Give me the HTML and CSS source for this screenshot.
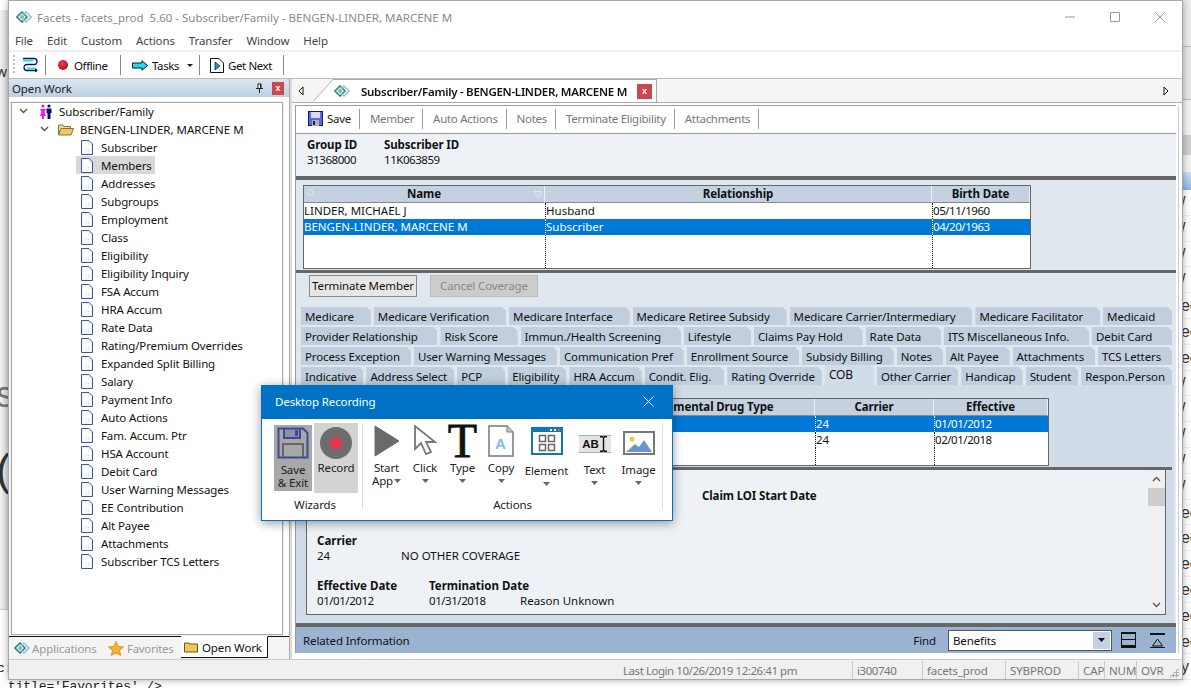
FILE: index.html
```html
<!DOCTYPE html>
<html lang="en">
<head>
  <meta charset="UTF-8" />
  <title>Facets - Desktop Recording</title>
  <link rel="stylesheet" href="styles.css">
</head>
<body>
  <svg class="defs" width="0" height="0">
    <symbol id="logo" viewBox="0 0 16 12">
      <path d="M6 1 11 6 6 11 1 6Z" fill="none" stroke="#2b8a7a" stroke-width="1.6"/>
      <path d="M10 1 15 6 10 11 5 6Z" fill="none" stroke="#9cc3d8" stroke-width="1.6"/>
      <path d="M6 3.5 8.5 6 6 8.5 3.5 6Z" fill="#7cc0a8"/>
    </symbol>
    <symbol id="doc" viewBox="0 0 12 15">
      <path d="M.5.5H8L11.5 4V14.5H.5Z" fill="#eef2fa" stroke="#3a5a96"/>
      <path d="M2 2H7V5H10V13H2Z" fill="#fff"/>
      <path d="M5 9h1v1H5zM7 9h1v1H7zM5 11h1v1H5zM7 11h1v1H7z" fill="#cfd8ea"/>
    </symbol>
    <symbol id="floppy" viewBox="0 0 15 15">
      <path d="M0 0H15V15H0Z" fill="#10205a"/>
      <path d="M1 1H14V14H1Z" fill="#5a6ad8"/>
      <path d="M3 1H12V7H3Z" fill="#d8dcf0"/>
      <path d="M4 9H11V15H4Z" fill="#b0b0b8"/>
      <path d="M5 10H7V14H5Z" fill="#202848"/>
    </symbol>
    <symbol id="caret" viewBox="0 0 7 4"><path d="M0 0H7L3.5 4Z" fill="#666"/></symbol>
  </svg>

  <div class="desktop">
    <div class="back-left">
      <span class="back-w">w</span>
      <span class="back-s">s</span>
      <span class="back-paren">(</span>
    </div>
    <div class="back-right">
      <div class="band band-a"></div>
      <div class="band band-b"></div>
      <div class="band band-c"></div>
      <div class="band band-d"></div>
      <div class="band band-e"></div>
      <div class="band band-f"></div>
      <div class="back-rows">
        <span>/</span><span>/</span><span>/</span><span>/</span>
        <span>ec</span><span>ec</span><span>ec</span>
        <span>/</span><span>/</span><span>/</span><span>/</span><span>/</span>
        <span>ec</span><span>ec</span><span>ec</span><span>ec</span><span>ec</span><span>ec</span>
        <span>y</span>
      </div>
    </div>
    <div class="back-bottom">
      <span class="back-c">c:</span>
      <span class="back-code">title='Favorites' /&gt;</span>
    </div>

    <div class="app">
      <div class="titlebar">
        <svg class="title-logo"><use href="#logo"/></svg>
        <span class="title-text">Facets - facets_prod&nbsp; 5.60 - Subscriber/Family - BENGEN-LINDER, MARCENE M</span>
        <div class="win-controls">
          <svg width="12" height="12" viewBox="0 0 12 12"><path d="M1 6H11" stroke="#999"/></svg>
          <svg width="12" height="12" viewBox="0 0 12 12"><path d="M1.5 1.5H10.5V10.5H1.5Z" fill="none" stroke="#999"/></svg>
          <svg width="12" height="12" viewBox="0 0 12 12"><path d="M1 1 11 11M11 1 1 11" stroke="#999"/></svg>
        </div>
      </div>
      <div class="menubar">
        <span>File</span><span>Edit</span><span>Custom</span><span>Actions</span><span>Transfer</span><span>Window</span><span>Help</span>
      </div>
      <div class="toolbar">
        <span class="grip"></span>
        <svg class="tb-switch" width="17" height="16" viewBox="0 0 17 16">
          <path d="M1 1.500H12C16 1.500 16 7.500 12 7.500H5C1 7.500 1 13.500 5 13.500H15" fill="none" stroke="#101060" stroke-width="1.300"/>
          <path d="M1 3.500H11.500M5 11.500H13" stroke="#1ee0e8" stroke-width="1.800"/>
          <path d="M13 11 16 13.500 13 15.500Z" fill="#101060"/>
        </svg>
        <span class="tb-sep first"></span>
        <span class="tb-item tb-offline"><i class="ball"></i>Offline</span>
        <span class="tb-sep"></span>
        <span class="tb-item tb-tasks">
          <svg width="16" height="11" viewBox="0 0 16 11"><path d="M.5 3H10V.8L15.5 5.5 10 10.2V8H.5Z" fill="#18e0e8" stroke="#101040"/></svg>
          Tasks
          <svg class="tb-caret" width="6" height="3" viewBox="0 0 6 3"><path d="M0 0H6L3 3Z" fill="#222"/></svg>
        </span>
        <span class="tb-sep"></span>
        <span class="tb-item tb-next">
          <svg width="14" height="15" viewBox="0 0 14 15"><path d="M.5.5H9L13.5 5V14.5H.5Z" fill="#fff" stroke="#111"/><path d="M5 4 10 8 5 12Z" fill="#12a0c8" stroke="#111" stroke-width=".7"/></svg>
          Get Next
        </span>
        <span class="tb-sep"></span>
      </div>

      <div class="workspace">
        <aside class="left-panel">
          <div class="panel-head">
            <span>Open Work</span>
            <svg class="pin" width="9" height="10" viewBox="0 0 9 10"><path d="M2.5.5H6.5V5H8V6H1V5H2.5ZM4 6H5V10H4Z" fill="#222"/><path d="M3.5 1.5H5V5H3.5Z" fill="#fff"/></svg>
            <span class="red-x">x</span>
          </div>
          <div class="tree">
            <div class="tree-row lvl0">
              <svg class="chev" width="9" height="6" viewBox="0 0 9 6"><path d="M1 1 4.5 4.5 8 1" fill="none" stroke="#555" stroke-width="1.4"/></svg>
              <svg class="people" width="14" height="15" viewBox="0 0 14 15">
                <circle cx="4" cy="2" r="1.6" fill="#f018e8"/><path d="M1 5H7L5.5 8 7 12H5V15H3V12H1L2.5 8Z" fill="#f018e8"/>
                <circle cx="10" cy="2" r="1.6" fill="#101060"/><path d="M7.5 4.5H12.5V9H11.5V15H8.5V9H7.5Z" fill="#101060"/>
              </svg>
              <span>Subscriber/Family</span>
            </div>
            <div class="tree-row lvl1">
              <svg class="chev" width="9" height="6" viewBox="0 0 9 6"><path d="M1 1 4.5 4.5 8 1" fill="none" stroke="#555" stroke-width="1.4"/></svg>
              <svg class="folder" width="16" height="13" viewBox="0 0 16 13"><path d="M.5 12V2H5L6 3.5H12.5V5.5" fill="#f0d898" stroke="#8a7438"/><path d="M.5 12 3 5.5H15.5L13 12Z" fill="#f0c868" stroke="#8a7438"/></svg>
              <span class="caps">BENGEN-LINDER, MARCENE M</span>
            </div>
            <div class="tree-row leaf"><svg class="doc"><use href="#doc"/></svg><span>Subscriber</span></div>
            <div class="tree-row leaf"><div class="leaf-sel"><svg class="doc"><use href="#doc"/></svg><span>Members</span></div></div>
            <div class="tree-row leaf"><svg class="doc"><use href="#doc"/></svg><span>Addresses</span></div>
            <div class="tree-row leaf"><svg class="doc"><use href="#doc"/></svg><span>Subgroups</span></div>
            <div class="tree-row leaf"><svg class="doc"><use href="#doc"/></svg><span>Employment</span></div>
            <div class="tree-row leaf"><svg class="doc"><use href="#doc"/></svg><span>Class</span></div>
            <div class="tree-row leaf"><svg class="doc"><use href="#doc"/></svg><span>Eligibility</span></div>
            <div class="tree-row leaf"><svg class="doc"><use href="#doc"/></svg><span>Eligibility Inquiry</span></div>
            <div class="tree-row leaf"><svg class="doc"><use href="#doc"/></svg><span>FSA Accum</span></div>
            <div class="tree-row leaf"><svg class="doc"><use href="#doc"/></svg><span>HRA Accum</span></div>
            <div class="tree-row leaf"><svg class="doc"><use href="#doc"/></svg><span>Rate Data</span></div>
            <div class="tree-row leaf"><svg class="doc"><use href="#doc"/></svg><span>Rating/Premium Overrides</span></div>
            <div class="tree-row leaf"><svg class="doc"><use href="#doc"/></svg><span>Expanded Split Billing</span></div>
            <div class="tree-row leaf"><svg class="doc"><use href="#doc"/></svg><span>Salary</span></div>
            <div class="tree-row leaf"><svg class="doc"><use href="#doc"/></svg><span>Payment Info</span></div>
            <div class="tree-row leaf"><svg class="doc"><use href="#doc"/></svg><span>Auto Actions</span></div>
            <div class="tree-row leaf"><svg class="doc"><use href="#doc"/></svg><span>Fam. Accum. Ptr</span></div>
            <div class="tree-row leaf"><svg class="doc"><use href="#doc"/></svg><span>HSA Account</span></div>
            <div class="tree-row leaf"><svg class="doc"><use href="#doc"/></svg><span>Debit Card</span></div>
            <div class="tree-row leaf"><svg class="doc"><use href="#doc"/></svg><span>User Warning Messages</span></div>
            <div class="tree-row leaf"><svg class="doc"><use href="#doc"/></svg><span>EE Contribution</span></div>
            <div class="tree-row leaf"><svg class="doc"><use href="#doc"/></svg><span>Alt Payee</span></div>
            <div class="tree-row leaf"><svg class="doc"><use href="#doc"/></svg><span>Attachments</span></div>
            <div class="tree-row leaf"><svg class="doc"><use href="#doc"/></svg><span>Subscriber TCS Letters</span></div>
          </div>
          <div class="nav-tabs">
            <span class="nav-tab nav-apps"><svg class="nav-logo"><use href="#logo"/></svg>Applications</span>
            <span class="nav-tab nav-fav">
              <svg width="16" height="15" viewBox="0 0 16 15"><path d="M8 .5 10.2 5.4 15.5 6 11.5 9.5 12.7 14.5 8 11.9 3.3 14.5 4.500 9.5.5 6 5.800 5.400Z" fill="#f8b030" stroke="#d08818" stroke-width=".8"/></svg>
              Favorites
            </span>
            <span class="nav-tab nav-open">
              <svg width="14" height="12" viewBox="0 0 14 12"><path d="M.5 11V2H5L6 3H13.500V11Z" fill="#f0c850" stroke="#6a5418"/></svg>
              Open Work
            </span>
          </div>
        </aside>

        <div class="splitter-v"></div>

        <main class="main-panel">
          <div class="doc-strip">
            <svg class="arrow" width="6" height="10" viewBox="0 0 6 10"><path d="M5 1 1 5 5 9Z" fill="#fff" stroke="#111"/></svg>
            <div class="doc-tab-wrap">
              <div class="doc-tab">
                <svg class="doc-logo"><use href="#logo"/></svg>
                <span>Subscriber/Family - BENGEN-LINDER, MARCENE M</span>
                <span class="red-x">x</span>
              </div>
            </div>
            <svg class="arrow arrow-right" width="6" height="10" viewBox="0 0 6 10"><path d="M1 1 5 5 1 9Z" fill="#fff" stroke="#111"/></svg>
          </div>

          <div class="doc-body">
            <div class="doc-toolbar">
              <span class="dt-item dt-save"><svg class="floppy"><use href="#floppy"/></svg>Save</span>
              <span class="dt-item">Member</span>
              <span class="dt-item">Auto Actions</span>
              <span class="dt-item">Notes</span>
              <span class="dt-item">Terminate Eligibility</span>
              <span class="dt-item">Attachments</span>
            </div>

            <div class="ids">
              <div class="id-col"><b>Group ID</b><span class="num">31368000</span></div>
              <div class="id-col"><b>Subscriber ID</b><span class="num">11K063859</span></div>
            </div>
            <div class="split-h"></div>

            <div class="members-pane">
              <div class="grid members">
                <div class="gh gh-name">
                  <svg class="gh-search" width="9" height="9" viewBox="0 0 9 9"><circle cx="3.500" cy="3.500" r="2.800" fill="none" stroke="#dfe6ef"/><path d="M5.500 5.500 8.500 8.500" stroke="#dfe6ef"/></svg>
                  Name
                  <svg class="gh-filter" width="8" height="7" viewBox="0 0 8 7"><path d="M.5.500H7.500L4 6.500Z" fill="none" stroke="#dfe6ef"/></svg>
                </div>
                <div class="gh">Relationship</div>
                <div class="gh">Birth Date</div>
                <div class="gc">LINDER, MICHAEL J</div><div class="gc">Husband</div><div class="gc num">05/11/1960</div>
                <div class="gc sel">BENGEN-LINDER, MARCENE M</div><div class="gc sel">Subscriber</div><div class="gc sel num">04/20/1963</div>
                <div class="gc blank"></div><div class="gc blank"></div><div class="gc blank"></div>
              </div>
            </div>
            <div class="split-h thin"></div>

            <div class="buttons-pane">
              <button class="btn">Terminate Member</button>
              <button class="btn off">Cancel Coverage</button>
            </div>

            <div class="tab-rows">
              <div class="tab-row">
                <span class="tab">Medicare</span><span class="tab">Medicare Verification</span><span class="tab">Medicare Interface</span><span class="tab">Medicare Retiree Subsidy</span><span class="tab">Medicare Carrier/Intermediary</span><span class="tab">Medicare Facilitator</span><span class="tab">Medicaid</span>
              </div>
              <div class="tab-row">
                <span class="tab">Provider Relationship</span><span class="tab">Risk Score</span><span class="tab">Immun./Health Screening</span><span class="tab">Lifestyle</span><span class="tab">Claims Pay Hold</span><span class="tab">Rate Data</span><span class="tab">ITS Miscellaneous Info.</span><span class="tab">Debit Card</span>
              </div>
              <div class="tab-row">
                <span class="tab">Process Exception</span><span class="tab">User Warning Messages</span><span class="tab">Communication Pref</span><span class="tab">Enrollment Source</span><span class="tab">Subsidy Billing</span><span class="tab">Notes</span><span class="tab">Alt Payee</span><span class="tab">Attachments</span><span class="tab">TCS Letters</span>
              </div>
              <div class="tab-row">
                <span class="tab">Indicative</span><span class="tab">Address Select</span><span class="tab tab-pcp">PCP</span><span class="tab">Eligibility</span><span class="tab">HRA Accum</span><span class="tab tab-cond">Condit. Elig.</span><span class="tab">Rating Override</span><span class="tab active">COB</span><span class="tab">Other Carrier</span><span class="tab">Handicap</span><span class="tab">Student</span><span class="tab">Respon.Person</span>
              </div>
            </div>

            <div class="tab-panel">
              <div class="grid cob">
                <div class="gh"></div><div class="gh">Supplemental Drug Type</div><div class="gh">Carrier</div><div class="gh">Effective</div>
                <div class="gc sel"></div><div class="gc sel"></div><div class="gc sel">24</div><div class="gc sel num">01/01/2012</div>
                <div class="gc"></div><div class="gc"></div><div class="gc">24</div><div class="gc num">02/01/2018</div>
                <div class="gc blank"></div><div class="gc blank"></div><div class="gc blank"></div><div class="gc blank"></div>
              </div>
              <div class="split-h thin inner"></div>
              <div class="detail">
                <div class="detail-text">
                  <div class="loi"><b>Claim LOI Start Date</b></div>
                  <div class="field-label"><b>Carrier</b></div>
                  <div class="field-row"><span class="c1">24</span><span>NO OTHER COVERAGE</span></div>
                  <div class="field-label eff"><b class="c2">Effective Date</b><b>Termination Date</b></div>
                  <div class="field-row"><span class="c2 num">01/01/2012</span><span class="c3 num">01/31/2018</span><span>Reason Unknown</span></div>
                </div>
                <div class="scroll">
                  <svg width="9" height="6" viewBox="0 0 9 6"><path d="M1 5 4.500 1.500 8 5" fill="none" stroke="#555" stroke-width="1.300"/></svg>
                  <div class="thumb"></div>
                  <svg class="scroll-down" width="9" height="6" viewBox="0 0 9 6"><path d="M1 1 4.500 4.500 8 1" fill="none" stroke="#555" stroke-width="1.300"/></svg>
                </div>
              </div>
            </div>
            <div class="split-h bottom"></div>

            <div class="related">
              <span class="related-title">Related Information</span>
              <span class="find-label">Find</span>
              <div class="find-box">
                <span>Benefits</span>
                <i class="find-btn"><svg width="7" height="4" viewBox="0 0 7 4"><path d="M0 0H7L3.500 4Z" fill="#111"/></svg></i>
              </div>
              <svg class="rel-ico" width="15" height="16" viewBox="0 0 15 16"><path d="M.5.500H14.500V15.500H.5Z" fill="none" stroke="#111"/><path d="M0 0H15V2H0ZM0 7H15V8H0ZM0 13H15V16H0Z" fill="#111"/></svg>
              <svg class="rel-ico" width="15" height="15" viewBox="0 0 15 15"><path d="M0 0H15V2H0ZM0 14H15V15H0Z" fill="#111"/><path d="M7.500 6 12.500 13H2.500Z" fill="none" stroke="#111"/></svg>
            </div>
          </div>
        </main>
      </div>

      <div class="statusbar">
        <span class="st st-login num">Last Login 10/26/2019 12:26:41 pm</span>
        <span class="st st-user num">i300740</span>
        <span class="st st-db">facets_prod</span>
        <span class="st st-syb">SYBPROD</span>
        <span class="st st-cap">CAP</span>
        <span class="st st-num">NUM</span>
        <span class="st st-ovr">OVR</span>
        <i class="corner-grip"></i>
      </div>
    </div>

    <div class="dialog">
      <div class="dlg-head">
        <span>Desktop Recording</span>
        <svg width="11" height="11" viewBox="0 0 11 11"><path d="M.5.500 10.500 10.500M10.500.500 .5 10.500" stroke="#fff"/></svg>
      </div>
      <div class="dlg-body">
        <div class="dlg-group wizards">
          <div class="dlg-buttons">
            <div class="wiz wiz-save">
              <svg width="32" height="32" viewBox="0 0 32 32">
                <path d="M1.500 1.500H26L30.500 6V30.500H1.500Z" fill="none" stroke="#3c4a9a" stroke-width="2"/>
                <path d="M7 2V11H23V2" fill="#3c4a9a" fill-opacity=".25" stroke="#3c4a9a" stroke-width="2"/>
                <path d="M18 3H21V9H18Z" fill="#3c4a9a"/>
                <path d="M6 30V17H26V30" fill="none" stroke="#666" stroke-width="2"/>
              </svg>
              <span>Save<br>&amp; Exit</span>
            </div>
            <div class="wiz wiz-rec">
              <svg width="32" height="32" viewBox="0 0 32 32"><circle cx="16" cy="16" r="16" fill="#6d6d6d"/><circle cx="16" cy="16" r="6" fill="#e8344e"/></svg>
              <span>Record</span>
            </div>
          </div>
          <div class="dlg-label">Wizards</div>
        </div>
        <div class="dlg-group actions">
          <div class="dlg-buttons">
            <div class="tool t-start">
              <svg width="26" height="32" viewBox="0 0 26 32"><path d="M1 1 25 16 1 31Z" fill="#6a6a6e" stroke="#6a6a6e" stroke-linejoin="round"/></svg>
              <span>Start<br>App<svg class="inline-caret"><use href="#caret"/></svg></span>
            </div>
            <div class="tool t-click">
              <svg width="24" height="32" viewBox="0 0 24 32"><path d="M2 1V24L8 18 13 29 18 27 13 17H22Z" fill="#fff" stroke="#777" stroke-width="1.800"/></svg>
              <span>Click</span><svg class="caret"><use href="#caret"/></svg>
            </div>
            <div class="tool t-type">
              <span class="big-t">T</span>
              <span>Type</span><svg class="caret"><use href="#caret"/></svg>
            </div>
            <div class="tool t-copy">
              <span class="copy-ico">
                <svg width="26" height="32" viewBox="0 0 26 32"><path d="M1 1H19L25 7V31H1Z" fill="#fff" stroke="#777" stroke-width="1.500"/><path d="M19 1V7H25" fill="#ccc" stroke="#777"/></svg>
                <span class="copy-a">A</span>
              </span>
              <span>Copy</span><svg class="caret"><use href="#caret"/></svg>
            </div>
            <div class="tool t-element">
              <svg width="32" height="28" viewBox="0 0 32 28"><path d="M0 0H32V28H0Z" fill="#1078b8"/><path d="M2 5H30V26H2Z" fill="#fff"/><path d="M19 2h2v2h-2zM23 2h2v2h-2z" fill="#fff"/><path d="M27 2h2v2h-2z" fill="#e85070"/><path d="M8.500 8.500H14.500V14.500H8.500ZM17.500 8.500H23.500V14.500H17.500ZM8.500 17.500H14.500V23.500H8.500ZM17.500 17.500H23.500V23.500H17.500Z" fill="none" stroke="#666" stroke-width="1.500"/></svg>
              <span>Element</span><svg class="caret"><use href="#caret"/></svg>
            </div>
            <div class="tool t-text">
              <span class="abi">
                <b>AB</b>
                <svg width="7" height="16" viewBox="0 0 7 16"><path d="M0 .8H2.500L3.500 1.800 4.500.8H7M3.500 1.800V14.200M0 15.200H2.500L3.500 14.200 4.500 15.200H7" fill="none" stroke="#111" stroke-width="1.400"/></svg>
              </span>
              <span>Text</span><svg class="caret"><use href="#caret"/></svg>
            </div>
            <div class="tool t-image">
              <svg width="32" height="24" viewBox="0 0 32 24"><path d="M1 1H31V23H1Z" fill="#fff" stroke="#777" stroke-width="2"/><circle cx="9" cy="8" r="2.500" fill="#f0c848"/><path d="M3 21 12 13 16 16 21 9 29 21Z" fill="#6a96d0"/></svg>
              <span>Image</span><svg class="caret"><use href="#caret"/></svg>
            </div>
          </div>
          <div class="dlg-label">Actions</div>
        </div>
      </div>
    </div>
  </div>
</body>
</html>
```

FILE: styles.css
```css
* {
  box-sizing: border-box;
}
html, body {
  margin: 0;
  padding: 0;
  overflow: hidden;
}
body {
  font-family: "Noto Sans", "Open Sans", sans-serif;
  font-size: 11.5px;
  letter-spacing: -.12px;
  color: #111;
  background: #fff;
}
.defs {
  position: absolute;
}
b {
  font-weight: 700;
}
svg {
  display: block;
  flex: none;
}
.caps {
  letter-spacing: 0;
}
.num {
  letter-spacing: -.45px;
}

/* desktop behind the window */
.desktop {
  position: relative;
  width: 1191px;
  height: 688px;
  overflow: hidden;
}
.back-left {
  position: absolute;
  left: 0;
  top: 10px;
  width: 8px;
  height: 600px;
  overflow: hidden;
  background: linear-gradient(90deg, #f4f4f4, #dcdcdc);
  border-bottom: 1px solid #ccc;
}
.back-left span {
  position: absolute;
  left: -4px;
}
.back-w {
  top: 52px;
  font-size: 14px;
  color: #333;
}
.back-s {
  top: 364px;
  font: 36px "Liberation Sans", sans-serif;
  color: #777;
}
.back-paren {
  top: 435px;
  font: 44px "Liberation Sans", sans-serif;
  color: #333;
}
.back-right {
  position: absolute;
  left: 1183px;
  top: 0;
  width: 8px;
  height: 688px;
  overflow: hidden;
  background: #fff;
}
.band {
  border-bottom: 1px solid #bbb;
  background: #ececec;
}
.band-a { height: 47px; }
.band-b { height: 53px; background: #e8e8e8; }
.band-c { height: 35px; background: #f2f2f2; border: 0; }
.band-d { height: 20px; background: #cfcfcf; border: 0; }
.band-e { height: 17px; background: #f2f2f2; border: 0; }
.band-f { height: 18px; background: linear-gradient(#cfe0f2, #8db5e4); border: 0; }
.back-rows {
  display: flex;
  flex-direction: column;
  margin-left: -2px;
}
.back-rows span {
  height: 25.8px;
  font: 16px/25px "Liberation Sans", sans-serif;
  color: #333;
  border-bottom: 1px solid #eee;
  white-space: nowrap;
}
.back-bottom {
  position: absolute;
  left: 0;
  right: 8px;
  top: 660px;
  height: 28px;
  font: 13px "Liberation Mono", monospace;
  color: #222;
}
.back-c {
  position: absolute;
  left: -3px;
  top: 1px;
}
.back-code {
  position: absolute;
  left: 8px;
  top: 19px;
}

/* main window */
.app {
  position: absolute;
  left: 8px;
  top: 0;
  width: 1175px;
  height: 680px;
  display: flex;
  flex-direction: column;
  background: #fff;
  border: 1px solid #a8a8a8;
  box-shadow: 0 0 7px rgba(0, 0, 0, .35);
}
.titlebar {
  height: 32px;
  flex: none;
  display: flex;
  align-items: center;
  padding-left: 7px;
  color: #8a8a8a;
}
.title-logo {
  width: 16px;
  height: 12px;
  margin-right: 5px;
}
.title-text {
  white-space: pre;
  letter-spacing: normal;
}
.win-controls {
  margin-left: auto;
  display: flex;
  gap: 33px;
  padding-right: 16px;
}
.menubar {
  height: 17px;
  flex: none;
  display: flex;
  gap: 14px;
  padding-left: 6px;
  line-height: 15px;
  color: #444;
  border-bottom: 2px solid #f0f0f0;
  box-sizing: content-box;
}
.toolbar {
  height: 27px;
  flex: none;
  display: flex;
  align-items: center;
  border-bottom: 1px solid #bbb;
  position: relative;
}
.grip {
  width: 2px;
  height: 20px;
  margin-left: 4px;
  background: repeating-linear-gradient(#bbb 0 2px, transparent 2px 4px);
}
.tb-switch {
  margin-left: 7px;
}
.tb-sep {
  width: 1px;
  height: 20px;
  background: #888;
}
.tb-sep.first {
  margin-left: 6px;
}
.tb-item {
  display: flex;
  align-items: center;
  white-space: nowrap;
  letter-spacing: -.4px;
}
.tb-offline {
  width: 74px;
  padding-left: 12px;
}
.ball {
  width: 10px;
  height: 10px;
  margin-right: 6px;
  border-radius: 50%;
  background: radial-gradient(circle at 40% 35%, #f04050, #980010);
}
.tb-tasks {
  width: 78px;
  padding-left: 11px;
  gap: 4px;
}
.tb-caret {
  margin-left: 4px;
}
.tb-next {
  width: 83px;
  padding-left: 10px;
  gap: 4px;
}

/* work area */
.workspace {
  flex: 1;
  min-height: 0;
  display: flex;
}
.left-panel {
  width: 280px;
  flex: none;
  display: flex;
  flex-direction: column;
}
.panel-head {
  height: 18px;
  flex: none;
  display: flex;
  align-items: center;
  padding: 0 5px 0 3px;
  background: linear-gradient(#dbe5f0, #bccfe2);
  color: #222;
}
.pin {
  margin-left: auto;
  margin-right: 8px;
}
.red-x {
  width: 12px;
  height: 13px;
  flex: none;
  background: #c8494f;
  color: #fff;
  font: 700 9px/12px "Liberation Sans", sans-serif;
  letter-spacing: 0;
  text-align: center;
}
.tree {
  flex: 1;
  margin: 5px 6px 1px 2px;
  border: 1px solid #aaa;
  box-shadow: 0 0 0 1px #eee;
  overflow: hidden;
}
.tree-row {
  height: 18px;
  display: flex;
  align-items: center;
  white-space: nowrap;
}
.tree-row:first-child {
  margin-top: -1px;
}
.chev {
  margin-right: 5px;
}
.lvl0 {
  padding-left: 7px;
}
.people {
  margin: 0 6px 0 6px;
}
.lvl1 {
  padding-left: 28px;
}
.folder {
  margin: 0 6px 0 4px;
}
.leaf {
  padding-left: 69px;
}
.leaf .doc {
  width: 12px;
  height: 15px;
  margin-right: 8px;
}
.leaf-sel {
  display: flex;
  align-items: center;
  height: 18px;
  margin-left: -5px;
  padding: 0 3px 0 5px;
  background: #d8d8d8;
}
.nav-tabs {
  height: 23px;
  flex: none;
  display: flex;
  align-items: center;
  border-top: 1px solid #111;
  background: #f4f4f4;
  color: #999;
}
.nav-tab {
  height: 22px;
  display: flex;
  align-items: center;
  white-space: nowrap;
}
.nav-logo {
  width: 16px;
  height: 12px;
  margin-right: 2px;
}
.nav-apps {
  width: 97px;
  padding-left: 5px;
  border-right: 0;
}
.nav-fav {
  width: 75px;
  padding-left: 2px;
  gap: 3px;
  letter-spacing: -.3px;
}
.nav-open {
  width: 87px;
  margin-top: -2px;
  padding-left: 3px;
  gap: 4px;
  color: #111;
  background: #fff;
  border-top: 1px solid #fff;
  border-right: 1px solid #111;
  border-bottom: 1px solid #111;
}
.splitter-v {
  width: 3px;
  flex: none;
  background: #ddd;
  border-left: 1px solid #aaa;
}

/* document */
.main-panel {
  flex: 1;
  min-width: 0;
  display: flex;
  flex-direction: column;
}
.doc-strip {
  height: 24px;
  flex: none;
  display: flex;
  align-items: center;
  padding: 0 13px 0 6px;
  background: #f5f5f5;
  border-bottom: 1px solid #aaa;
}
.doc-tab-wrap {
  margin-left: 9px;
  align-self: flex-end;
  filter: drop-shadow(0 -1px 0 #aaa) drop-shadow(1px 0 0 #aaa);
}
.doc-tab {
  width: 343px;
  height: 22px;
  display: flex;
  align-items: center;
  padding-left: 21px;
  background: #fff;
  font-weight: 600;
  letter-spacing: -.27px;
  white-space: nowrap;
  clip-path: polygon(0 100%, 20px 0, 100% 0, 100% 100%);
}
.doc-logo {
  width: 16px;
  height: 12px;
  margin-right: 11px;
}
.doc-tab .red-x {
  margin-left: auto;
  margin-right: 4px;
  width: 15px;
  height: 15px;
  line-height: 14px;
}
.arrow-right {
  margin-left: auto;
}
.doc-body {
  flex: 1;
  min-height: 0;
  display: flex;
  flex-direction: column;
  margin: 2px 6px 6px 3px;
  border-top: 1px solid #999;
  border-left: 1px solid #999;
  background: #e0e7ef;
  color: #111;
  box-shadow: 2px 0 0 #fff, 3px 0 0 #ccc;
}
.doc-toolbar {
  height: 28px;
  flex: none;
  display: flex;
  align-items: center;
  padding: 0 0 2px 12px;
  background: #fff;
  border-bottom: 1px solid #999;
}
.dt-item {
  height: 20px;
  display: flex;
  align-items: center;
  padding: 0 8px 0 10px;
  color: #777;
  letter-spacing: -.3px;
  border-right: 1px solid #999;
  white-space: nowrap;
}
.dt-save {
  padding-left: 0;
  color: #222;
  gap: 4px;
}
.floppy {
  width: 15px;
  height: 15px;
}
.ids {
  height: 42px;
  flex: none;
  display: flex;
  padding: 3px 11px;
  background: #eef1f6;
}
.id-col {
  display: flex;
  flex-direction: column;
  line-height: 15px;
}
.id-col:first-child {
  width: 77px;
}
.split-h {
  height: 4px;
  flex: none;
  background: #666;
}
.split-h.thin {
  height: 3px;
}
.split-h.inner {
  margin: 1px 2px 0 0;
}
.members-pane {
  height: 90px;
  flex: none;
  padding: 5px 0 0 7px;
  background: #e0e7ef;
}
.grid {
  display: grid;
  background: #fff;
  border: 1px solid #666;
}
.members {
  width: 728px;
  height: 84px;
  grid-template-columns: 241px 387px 1fr;
  grid-template-rows: 17px 16px 16px 1fr;
}
.gh {
  position: relative;
  text-align: center;
  font-weight: 700;
  line-height: 15px;
  background: #c3d1e1;
  border-right: 1px solid #eef;
  border-bottom: 1px solid #888;
}
.gh-search {
  position: absolute;
  left: 3px;
  top: 3px;
}
.gh-filter {
  position: absolute;
  right: 2px;
  top: 5px;
}
.gc {
  line-height: 16px;
  letter-spacing: 0;
  white-space: nowrap;
  background: #fff;
  border-left: 1px dotted #111;
}
.gc.num {
  letter-spacing: -.45px;
}
.members .gc:nth-child(3n+1) {
  border-left: 0;
}
.sel {
  background: #0078d7;
  color: #fff;
  border-left-color: #fff;
}
.buttons-pane {
  height: 31px;
  flex: none;
  display: flex;
  gap: 13px;
  padding: 2px 0 0 13px;
  background: #e0e7ef;
}
.btn {
  width: 108px;
  height: 22px;
  padding: 0 0 2px;
  font: inherit;
  letter-spacing: inherit;
  color: #111;
  background: #e6e6e6;
  border: 1px solid #8a8a8a;
}
.btn.off {
  color: #888;
  background: #ccc;
  border-color: #bbb;
}
.tab-rows {
  flex: none;
  display: flex;
  flex-direction: column;
  gap: 2px;
  padding: 3px 4px 0 5px;
  background: #e0e7ef;
}
.tab-row {
  height: 18px;
  display: flex;
  gap: 3px;
}
.tab {
  flex: 1 1 auto;
  padding: 1px 4px 0;
  line-height: 18px;
  white-space: nowrap;
  background: #c0cedd;
  clip-path: polygon(0 0, calc(100% - 4px) 0, 100% 4px, 100% 100%, 0 100%);
}
.tab-pcp {
  min-width: 48px;
}
.tab-cond {
  padding-right: 10px;
}
.tab.active {
  min-width: 49px;
  height: 20px;
  margin-top: -2px;
  font-size: 12px;
  line-height: 17px;
  background: #d0dce8;
}
.tab-panel {
  flex: 1;
  min-height: 0;
  display: flex;
  flex-direction: column;
  margin-right: 2px;
  padding-top: 13px;
  background: #d0dce8;
}
.cob {
  width: 746px;
  height: 68px;
  flex: none;
  margin-left: 7px;
  grid-template-columns: 291px 220px 119px 1fr;
  grid-template-rows: 17px 16px 16px 1fr;
}
.cob .gc:nth-child(4n+1) {
  border-left: 0;
}
.detail {
  height: 145px;
  flex: none;
  display: flex;
  margin: 0 8px 0 10px;
  background: #eef1f6;
  border-right: 1px solid #666;
  border-bottom: 1px solid #666;
  border-left: 1px solid #666;
}
.detail-text {
  flex: 1;
  min-width: 0;
  padding: 18px 0 0 10px;
  line-height: 15px;
  letter-spacing: 0;
}
.loi {
  padding-left: 385px;
  height: 45px;
  letter-spacing: -.1px;
}
.field-row {
  display: flex;
}
.c1 {
  width: 84px;
}
.c2 {
  display: inline-block;
  width: 112px;
}
.c3 {
  width: 91px;
}
.eff {
  margin-top: 15px;
}
.scroll {
  width: 17px;
  flex: none;
  display: flex;
  flex-direction: column;
  align-items: center;
  padding: 6px 0;
  background: #f0f0f0;
}
.thumb {
  width: 100%;
  height: 18px;
  margin-top: 6px;
  background: #cdcdcd;
}
.scroll-down {
  margin-top: auto;
}
.split-h.bottom {
  margin-top: 0;
}
.related {
  height: 26px;
  flex: none;
  display: flex;
  align-items: center;
  padding: 0 11px 0 7px;
  background: #9ab3d0;
}
.find-label {
  margin-left: auto;
  margin-right: 12px;
}
.find-box {
  width: 164px;
  height: 21px;
  display: flex;
  align-items: center;
  justify-content: space-between;
  padding-left: 4px;
  background: #fff;
  border: 1px solid #555;
}
.find-btn {
  width: 17px;
  height: 17px;
  margin-right: 1px;
  display: flex;
  align-items: center;
  justify-content: center;
  background: #c3d1e1;
}
.rel-ico {
  margin-left: 9px;
}
.rel-ico:last-child {
  margin-left: 14px;
}

/* status bar */
.statusbar {
  height: 20px;
  flex: none;
  display: flex;
  align-items: center;
  color: #777;
  background: #f0f0f0;
  border-top: 1px solid #ccc;
}
.st {
  height: 18px;
  padding: 1px 0 0 4px;
  line-height: 18px;
  white-space: nowrap;
  border-right: 1px solid #ccc;
}
.st-login {
  width: 844px;
  padding-left: 614px;
}
.st-user { width: 70px; }
.st-db { width: 83px; letter-spacing: -.2px; }
.st-syb { width: 73px; }
.st-cap { width: 26px; }
.st-num { width: 32px; }
.st-ovr { width: 28px; border: 0; }
.corner-grip {
  width: 10px;
  height: 10px;
  margin: 6px 0 0 4px;
  background: radial-gradient(circle, #aaa 1px, transparent 1.2px) 0 0 / 3px 3px;
  clip-path: polygon(100% 0, 100% 100%, 0 100%);
}

/* recording dialog */
.dialog {
  position: absolute;
  left: 261px;
  top: 385px;
  width: 412px;
  height: 136px;
  display: flex;
  flex-direction: column;
  background: #fff;
  border: 1px solid #0072c6;
  box-shadow: 0 2px 10px rgba(0, 0, 0, .4);
}
.dlg-head {
  height: 33px;
  flex: none;
  display: flex;
  align-items: center;
  justify-content: space-between;
  padding: 0 18px 2px 13px;
  color: #fff;
  background: #0072c6;
}
.dlg-body {
  flex: 1;
  display: flex;
  padding-top: 4px;
  color: #222;
}
.dlg-group {
  display: flex;
  flex-direction: column;
  align-items: center;
  border-right: 1px solid #ddd;
  height: 86px;
}
.wizards {
  width: 101px;
  padding-left: 12px;
}
.wizards .dlg-buttons {
  align-self: flex-start;
}
.wizards .dlg-label {
  margin-right: 6px;
}
.actions {
  width: 300px;
}
.actions .dlg-buttons {
  margin-left: 2px;
}
.dlg-buttons {
  display: flex;
  height: 72px;
  flex: none;
}
.dlg-label {
  margin-top: 2px;
  line-height: 16px;
}
.wiz {
  display: flex;
  flex-direction: column;
  align-items: center;
  text-align: center;
  line-height: 13px;
}
.wiz-save {
  width: 38px;
  height: 66px;
  margin-top: 2px;
  padding-top: 2px;
  gap: 4px;
  background: #a8a8a8;
}
.wiz-rec {
  width: 44px;
  height: 70px;
  margin-left: 2px;
  padding-top: 4px;
  gap: 2px;
  background: #d3d3d3;
}
.tool {
  display: flex;
  flex-direction: column;
  align-items: center;
  height: 72px;
  line-height: 13px;
  text-align: center;
}
.tool > svg:first-child, .big-t, .copy-ico {
  height: 32px;
  margin-bottom: 4px;
}
.t-start { width: 40px; padding-top: 2px; }
.t-click { width: 37px; padding-top: 2px; }
.t-type { width: 38px; padding-top: 2px; }
.t-copy { width: 39px; padding-top: 2px; }
.t-element { width: 52px; padding-top: 4px; }
.t-element > svg:first-child { height: 28px; margin-bottom: 9px; }
.t-text { width: 44px; padding-top: 12px; }
.t-image { width: 44px; padding-top: 8px; }
.t-image > svg:first-child { height: 24px; margin-bottom: 8px; }
.caret {
  width: 7px;
  height: 4px;
  margin-top: 5px;
}
.inline-caret {
  display: inline-block;
  width: 7px;
  height: 4px;
  margin: 0 0 2px 1px;
}
.big-t {
  font: 400 48px/32px "Liberation Serif", serif;
  -webkit-text-stroke: .8px #111;
  color: #111;
  letter-spacing: 0;
}
.copy-ico {
  position: relative;
}
.copy-a {
  position: absolute;
  left: 7px;
  top: 10px;
  font: 700 15px "Liberation Sans", sans-serif;
  color: #7cbcec;
}
.abi {
  width: 32px;
  height: 18px;
  margin-bottom: 10px;
  display: flex;
  align-items: center;
  justify-content: center;
  gap: 1px;
  font: 700 11.5px "Liberation Sans", sans-serif;
  color: #111;
  background: #e4e4e4;
  border-top: 1px solid #aaa;
  border-bottom: 1px solid #aaa;
}
```
